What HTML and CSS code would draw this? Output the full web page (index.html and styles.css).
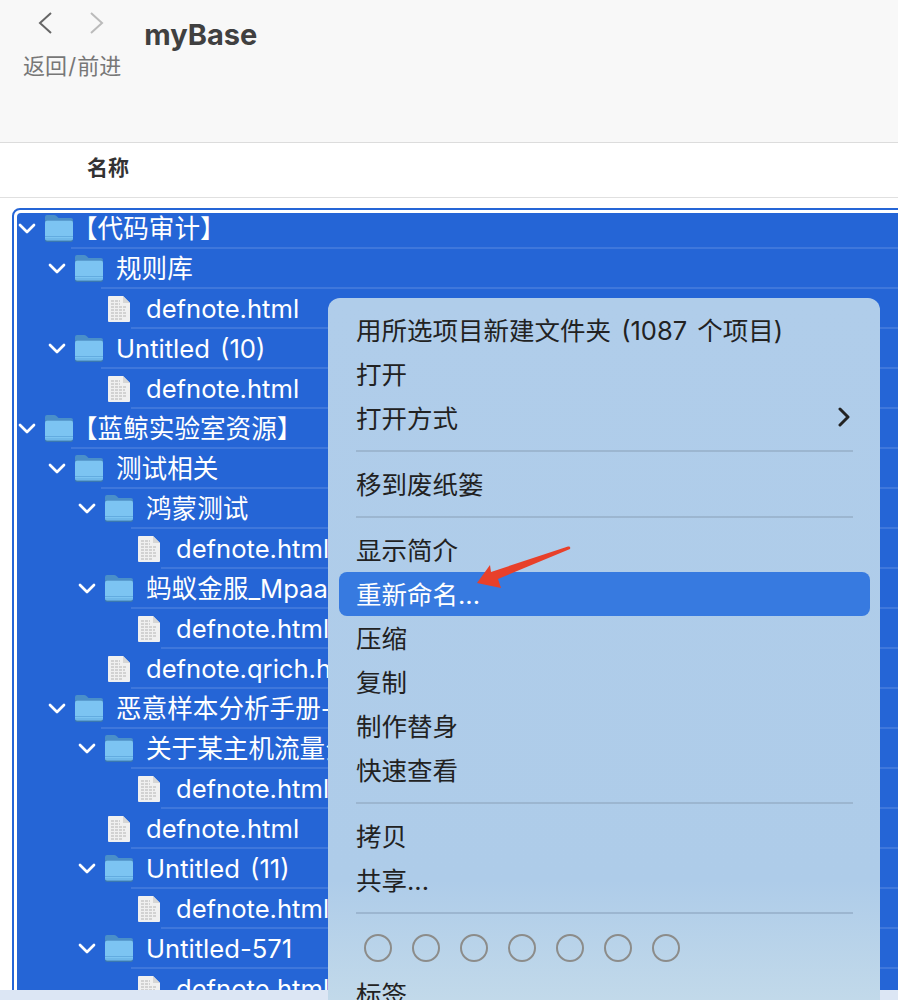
FILE: index.html
```html
<!DOCTYPE html>
<html lang="zh-CN">
<head>
    <meta charset="UTF-8">
    <title>myBase</title>
    <link rel="stylesheet" href="styles.css">
</head>
<body>
    <svg class="defs" width="0" height="0">
        <symbol id="chevron" viewBox="0 0 20 20">
            <path d="M3 6l7 7l7-7" fill="none" stroke="#fff" stroke-width="2.700" stroke-linecap="round" stroke-linejoin="round"/>
        </symbol>
        <symbol id="folder" viewBox="0 0 28 28">
            <path d="M0 2a2 2 0 0 1 2-2h7q1.500 0 2.500 1l2 2h12.500a2 2 0 0 1 2 2v8H0z" fill="#4a8fc9"/>
            <rect x="0" y="5" width="28" height="22" rx="2" fill="#3a78b0"/>
            <rect x="0" y="5.500" width="28" height="20" rx="2" fill="#7cc4f2"/>
            <rect x="0" y="21" width="28" height="1" fill="#62abe0"/>
            <rect x="0" y="23.500" width="28" height="1" fill="#62abe0"/>
        </symbol>
        <symbol id="file" viewBox="0 0 24 28">
            <path d="M1 2a1 1 0 0 1 1-1h14l7 7v18a1 1 0 0 1-1 1H2a1 1 0 0 1-1-1z" fill="#f0f0f0"/>
            <path d="M16 1l7 7h-7z" fill="#d6d6d6"/>
            <path d="M4 6h9M4 9h9M4 12h16M4 15h14M4 18h16M4 21h15M4 24h12" stroke="#b4b4b4" stroke-width="1" stroke-dasharray="3 1"/>
        </symbol>
    </svg>

    <header class="toolbar">
        <div class="nav">
            <div class="nav-arrows">
                <svg class="nav-icon" viewBox="0 0 16 24"><path d="M14 2L3 12l11 10" fill="none" stroke="#666" stroke-width="2"/></svg>
                <svg class="nav-icon" viewBox="0 0 16 24"><path d="M2 2l11 10L2 22" fill="none" stroke="#bbb" stroke-width="2"/></svg>
            </div>
            <span class="nav-label">返回 / 前进</span>
        </div>
        <h1 class="title">myBase</h1>
    </header>

    <div class="col-header">名称</div>

    <div class="tree">
        <ul class="tree-list">
            <li class="row level-0"><svg class="chevron"><use href="#chevron"/></svg><svg class="folder"><use href="#folder"/></svg><span class="name bracket">【代码审计】</span></li>
            <li class="row level-1"><svg class="chevron"><use href="#chevron"/></svg><svg class="folder"><use href="#folder"/></svg><span class="name">规则库</span></li>
            <li class="row level-2 leaf"><svg class="file"><use href="#file"/></svg><span class="name">defnote.html</span></li>
            <li class="row level-1"><svg class="chevron"><use href="#chevron"/></svg><svg class="folder"><use href="#folder"/></svg><span class="name">Untitled (10)</span></li>
            <li class="row level-2 leaf"><svg class="file"><use href="#file"/></svg><span class="name">defnote.html</span></li>
            <li class="row level-0"><svg class="chevron"><use href="#chevron"/></svg><svg class="folder"><use href="#folder"/></svg><span class="name bracket">【蓝鲸实验室资源】</span></li>
            <li class="row level-1"><svg class="chevron"><use href="#chevron"/></svg><svg class="folder"><use href="#folder"/></svg><span class="name">测试相关</span></li>
            <li class="row level-2"><svg class="chevron"><use href="#chevron"/></svg><svg class="folder"><use href="#folder"/></svg><span class="name">鸿蒙测试</span></li>
            <li class="row level-3 leaf"><svg class="file"><use href="#file"/></svg><span class="name">defnote.html</span></li>
            <li class="row level-2"><svg class="chevron"><use href="#chevron"/></svg><svg class="folder"><use href="#folder"/></svg><span class="name">蚂蚁金服_Mpaas</span></li>
            <li class="row level-3 leaf"><svg class="file"><use href="#file"/></svg><span class="name">defnote.html</span></li>
            <li class="row level-2 leaf"><svg class="file"><use href="#file"/></svg><span class="name">defnote.qrich.html</span></li>
            <li class="row level-1"><svg class="chevron"><use href="#chevron"/></svg><svg class="folder"><use href="#folder"/></svg><span class="name">恶意样本分析手册-</span></li>
            <li class="row level-2"><svg class="chevron"><use href="#chevron"/></svg><svg class="folder"><use href="#folder"/></svg><span class="name">关于某主机流量分析</span></li>
            <li class="row level-3 leaf"><svg class="file"><use href="#file"/></svg><span class="name">defnote.html</span></li>
            <li class="row level-2 leaf"><svg class="file"><use href="#file"/></svg><span class="name">defnote.html</span></li>
            <li class="row level-2"><svg class="chevron"><use href="#chevron"/></svg><svg class="folder"><use href="#folder"/></svg><span class="name">Untitled (11)</span></li>
            <li class="row level-3 leaf"><svg class="file"><use href="#file"/></svg><span class="name">defnote.html</span></li>
            <li class="row level-2"><svg class="chevron"><use href="#chevron"/></svg><svg class="folder"><use href="#folder"/></svg><span class="name">Untitled-571</span></li>
            <li class="row level-3 leaf"><svg class="file"><use href="#file"/></svg><span class="name">defnote.html</span></li>
        </ul>
    </div>

    <div class="bottom-band"></div>

    <!-- Context menu -->
    <div class="menu">
        <div class="menu-item">用所选项目新建文件夹 (1087 个项目)</div>
        <div class="menu-item">打开</div>
        <div class="menu-item">打开方式
            <svg class="submenu-icon" viewBox="0 0 12 20"><path d="M2 2l8 8l-8 8" fill="none" stroke="#222" stroke-width="3" stroke-linecap="round" stroke-linejoin="round"/></svg>
        </div>
        <div class="menu-sep"></div>
        <div class="menu-item">移到废纸篓</div>
        <div class="menu-sep"></div>
        <div class="menu-item">显示简介</div>
        <div class="menu-item active">重新命名...</div>
        <div class="menu-item">压缩</div>
        <div class="menu-item">复制</div>
        <div class="menu-item">制作替身</div>
        <div class="menu-item">快速查看</div>
        <div class="menu-sep"></div>
        <div class="menu-item">拷贝</div>
        <div class="menu-item">共享...</div>
        <div class="menu-sep"></div>
        <div class="tag-row">
            <span class="tag"></span>
            <span class="tag"></span>
            <span class="tag"></span>
            <span class="tag"></span>
            <span class="tag"></span>
            <span class="tag"></span>
            <span class="tag"></span>
        </div>
        <div class="menu-item">标签...</div>
    </div>

    <svg class="annotation" viewBox="0 0 110 55">
        <path d="M7 43L20 25L21 32L98 6.500Q101 6 100 9L28 39L31 48z" fill="#e8402a"/>
    </svg>
</body>
</html>
```

FILE: styles.css
```css
* {
    margin: 0;
    padding: 0;
    box-sizing: border-box;
}

html, body {
    height: 1000px;
    overflow: hidden;
}

body {
    position: relative;
    background-color: #fff;
    font-family: Inter, "Noto Sans CJK SC", sans-serif;
}

.defs {
    position: absolute;
}

/* Toolbar */
.toolbar {
    height: 143px;
    padding: 11px 0 0 23px;
    display: flex;
    gap: 23px;
    background-color: #f8f8f8;
    border-bottom: 1px solid #dcdcdc;
}

.nav {
    display: flex;
    flex-direction: column;
    gap: 16px;
}

.nav-arrows {
    display: flex;
    gap: 36px;
    padding-left: 14px;
}

.nav-icon {
    width: 16px;
    height: 24px;
}

.nav-label {
    font-size: 22px;
    line-height: 30px;
    color: #777;
    word-spacing: -5px;
    white-space: nowrap;
}

.title {
    font-size: 29px;
    line-height: 48px;
    font-weight: 700;
    color: #404040;
}

.col-header {
    height: 55px;
    padding-left: 87px;
    font-size: 21px;
    font-weight: 700;
    line-height: 50px;
    color: #333;
    border-bottom: 1px solid #e0e0e0;
}

/* Tree */
.tree {
    margin: 10px -20px 0 12px;
    padding: 3px;
    border: 2px solid #2565d6;
    border-radius: 8px;
}

.tree-list {
    list-style: none;
    background-color: #2565d6;
    border-radius: 4px;
    overflow: hidden;
}

.row {
    height: 40px;
    display: flex;
    align-items: center;
    color: #fff;
    font-size: 25.6px;
    white-space: nowrap;
}

.row:first-child {
    margin-top: -4px;
}

.level-0 { padding-left: 0; }
.level-1 { padding-left: 30px; }
.level-2 { padding-left: 60px; }
.level-3 { padding-left: 90px; }

.chevron {
    width: 20px;
    height: 20px;
    margin-right: 8px;
    flex: none;
}

.folder {
    width: 28px;
    height: 28px;
    margin-right: -2px;
    flex: none;
}

.file {
    width: 24px;
    height: 28px;
    margin-left: 30px;
    flex: none;
}

.name {
    flex: 1;
    height: 40px;
    line-height: 40px;
    padding-left: 15px;
    border-bottom: 2px solid #3f77db;
    word-spacing: 3px;
}

.bracket {
    text-indent: -14px;
}

.bottom-band {
    position: absolute;
    left: 0;
    right: 0;
    top: 990px;
    height: 10px;
    background-color: #dce6f4;
}

/* Context menu */
.menu {
    position: absolute;
    left: 328px;
    top: 298px;
    width: 552px;
    padding: 10px 10px 10px 11px;
    border-radius: 12px;
    color: #222;
    font-size: 25.5px;
    background: linear-gradient(180deg, #b0cdea 0%, #aecce9 80%, #c6dcea 100%);
}

.menu-item {
    height: 44px;
    padding: 0 20px 3px 17px;
    display: flex;
    align-items: center;
    justify-content: space-between;
    border-radius: 8px;
    white-space: nowrap;
    word-spacing: 3px;
}

.menu-item.active {
    background-color: #377ae0;
    color: #fff;
}

.submenu-icon {
    width: 12px;
    height: 20px;
}

.menu-sep {
    height: 2px;
    margin: 10px 17px;
    background-color: #9cb6d0;
}

.tag-row {
    height: 48px;
    padding-left: 25px;
    display: flex;
    align-items: center;
    gap: 20px;
}

.tag {
    width: 28px;
    height: 28px;
    border: 2px solid #8c8c8a;
    border-radius: 50%;
}

.annotation {
    position: absolute;
    left: 470px;
    top: 540px;
    width: 110px;
    height: 55px;
}
```
